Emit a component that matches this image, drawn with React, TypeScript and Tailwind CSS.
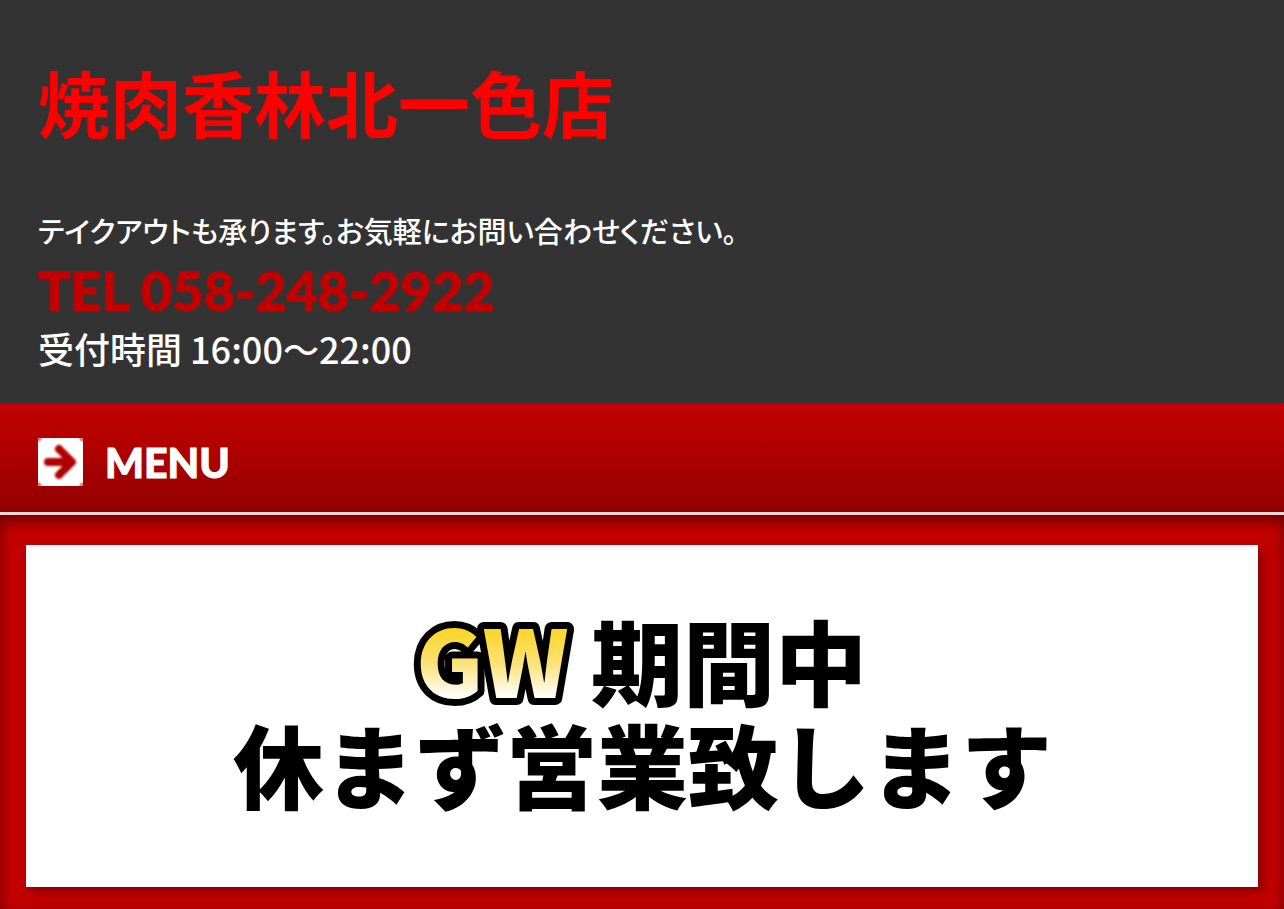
const TEL = '058-248-2922';

function MenuIcon() {
  return (
    <svg viewBox="0 0 45 48" className="h-12 w-[45px] shrink-0" aria-hidden="true">
      <defs>
        <filter id="soft">
          <feGaussianBlur stdDeviation="0.9" />
        </filter>
      </defs>
      <rect width="45" height="48" fill="#fff" />
      <g filter="url(#soft)">
        <path d="M0 0H4L0 4ZM45 0H41L45 4ZM0 48H4L0 44ZM45 48H41L45 44Z" fill="#b00000" />
        <path
          d="M10 24H33M21 11L34 24L21 37"
          fill="none"
          stroke="#b00000"
          strokeWidth="8"
          strokeLinecap="round"
          strokeLinejoin="round"
        />
      </g>
    </svg>
  );
}

function Header() {
  return (
    <header className="bg-[#333] px-[38px] pt-[54px] pb-[37px] text-white">
      <h1 className="text-[72px] leading-[100px] font-bold text-[#f00]">
        <a href="#">焼肉香林北一色店</a>
      </h1>
      <div className="pt-[58px]">
        <p className="text-[29px] leading-10 font-medium [font-feature-settings:'palt']">
          テイクアウトも承ります。お気軽にお問い合わせください。
        </p>
        <p className="text-[54px] leading-[78px] font-black text-[#c30000] [-webkit-text-stroke:1px]">
          <a href={`tel:${TEL}`}>TEL {TEL}</a>
        </p>
        <p className="font-['Noto_Sans_CJK_JP',sans-serif] text-[36px] leading-9 font-medium">受付時間 16:00～22:00</p>
      </div>
    </header>
  );
}

function MenuBar() {
  return (
    <nav className="border-b-3 border-[#e8d5d5] bg-linear-to-b from-[#c40000] to-[#930000]">
      <button type="button" className="flex w-full items-center gap-[22px] px-[38px] pt-7 pb-[19px] text-left">
        <MenuIcon />
        <span className="pt-0.5 text-[41px] leading-[60px] font-black text-white [-webkit-text-stroke:1px]">MENU</span>
      </button>
    </nav>
  );
}

function Banner() {
  return (
    <svg viewBox="0 0 1232 342" className="block w-full bg-white shadow-[5px_5px_10px_rgba(0,0,0,0.3)]">
      <defs>
        <linearGradient id="gold" x1="0" y1="0" x2="0" y2="1">
          <stop offset="0.25" stopColor="#fdd319" />
          <stop offset="0.55" stopColor="#fce27a" />
          <stop offset="0.8" stopColor="#fff" />
        </linearGradient>
      </defs>
      <g className="font-['Noto_Sans_CJK_JP',sans-serif] font-black">
        <text x="390" y="153" fontSize="92" fill="url(#gold)" stroke="#000" strokeWidth="14" strokeLinejoin="round" paintOrder="stroke">
          GW
        </text>
        <text x="565" y="154" fontSize="92">期間中</text>
        <text x="207" y="257" fontSize="91">休まず営業致します</text>
      </g>
    </svg>
  );
}

export default function App() {
  return (
    <div lang="ja" className="min-h-screen bg-[#c30000] font-[Lato,'Noto_Sans_CJK_JP',sans-serif]">
      <Header />
      <MenuBar />
      <main className="px-[26px] pt-[30px] pb-[22px] shadow-[inset_0_6px_14px_rgba(0,0,0,0.45)]">
        <Banner />
      </main>
    </div>
  );
}
